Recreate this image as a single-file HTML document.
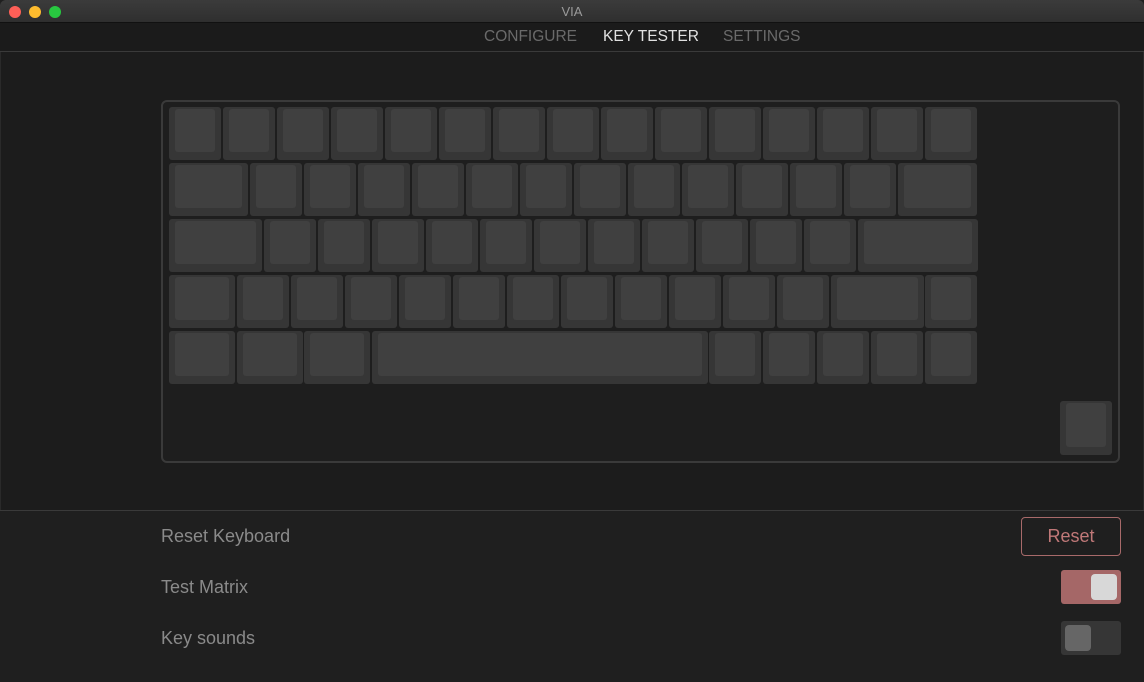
<!DOCTYPE html>
<html><head><meta charset="utf-8"><style>
*{margin:0;padding:0;box-sizing:border-box}
body{width:1144px;height:682px;background:#1f1f1f;font-family:"Liberation Sans",sans-serif;position:relative;overflow:hidden}
.tb{position:absolute;left:0;top:0;width:1144px;height:23px;background:linear-gradient(#3b3b3b,#2f2f2f);border-bottom:1px solid #111;border-radius:6px 6px 0 0}
.tb .t{position:absolute;left:0;right:0;top:4px;text-align:center;color:#9a9a9a;font-size:13px}
.dot{position:absolute;top:6px;width:12px;height:12px;border-radius:50%}
.nav{position:absolute;top:23px;left:0;width:1144px;height:29px;background:#1b1b1b;border-bottom:1px solid #3a3a3a}
.nav span{position:absolute;top:5px;font-size:15.5px;color:#6a6a6a}
.main{position:absolute;top:52px;left:0;width:1144px;height:458px;background:#1c1c1c;border-left:1px solid #2a2a2a;border-right:1px solid #2a2a2a}
.frame{position:absolute;left:161px;top:100px;width:959px;height:363px;border:2px solid #3a3a3a;border-radius:6px;background:#1e1e1e}
.k{position:absolute;height:53px;background:#363636;border-radius:3px}
.k i{position:absolute;left:6px;right:6px;top:2px;bottom:8px;background:#404040;border-radius:3px}
.line{position:absolute;top:510px;left:0;width:1144px;height:1px;background:#3a3a3a}
.lbl{position:absolute;left:161px;font-size:18px;color:#8a8a8a}
.btn{position:absolute;left:1021px;top:517px;width:100px;height:39px;border:1px solid #a86a6a;border-radius:4px;color:#c07878;font-size:18px;text-align:center;line-height:37px}
.sw{position:absolute;left:1061px;width:60px;height:34px;border-radius:3px}
.sw b{position:absolute;top:4px;width:26px;height:26px;border-radius:4px}
</style></head><body>
<div class="tb"><div class="dot" style="left:9px;background:#fe5f57"></div><div class="dot" style="left:29px;background:#febc2e"></div><div class="dot" style="left:49px;background:#28c840"></div><div class="t">VIA</div></div>
<div class="nav"><span style="left:484px">CONFIGURE</span><span style="left:603px;color:#e0e0e0">KEY TESTER</span><span style="left:723px">SETTINGS</span></div>
<div class="main"></div>
<div class="frame"></div>
<div id="keys"></div>
<div class="line"></div>
<div class="lbl" style="top:526px">Reset Keyboard</div>
<div class="lbl" style="top:577px">Test Matrix</div>
<div class="lbl" style="top:628px">Key sounds</div>
<div class="btn">Reset</div>
<div class="sw" style="top:570px;background:#a56767"><b style="left:30px;background:#d8d8d8"></b></div>
<div class="sw" style="top:621px;background:#363636"><b style="left:4px;background:#666"></b></div>
<script>
var rows=[[1,1,1,1,1,1,1,1,1,1,1,1,1,1,1],[1.5,1,1,1,1,1,1,1,1,1,1,1,1,1.5],[1.75,1,1,1,1,1,1,1,1,1,1,1,2.25],[1.25,1,1,1,1,1,1,1,1,1,1,1,1.75,1],[1.25,1.25,1.25,6.25,1,1,1,1,1]];
var h='';rows.forEach(function(r,ri){var x=169;r.forEach(function(w){h+='<div class="k" style="left:'+Math.round(x)+'px;top:'+(107+ri*56)+'px;width:'+Math.round(w*54-2)+'px"><i></i></div>';x+=w*54;});});
h+='<div class="k" style="left:1060px;top:401px;width:52px;height:54px"><i></i></div>';
document.getElementById('keys').innerHTML=h;
</script>
</body></html>
